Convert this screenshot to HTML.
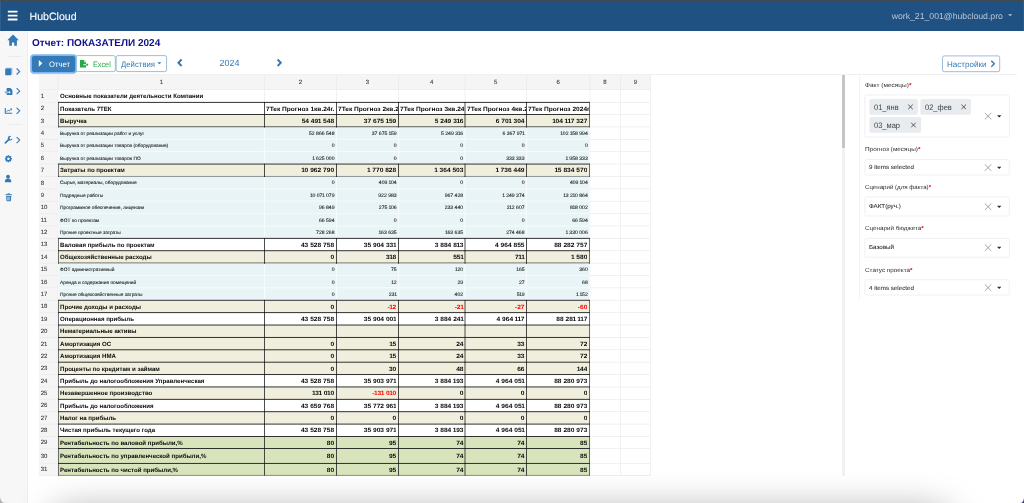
<!DOCTYPE html>
<html lang="ru"><head><meta charset="utf-8"><title>HubCloud</title>
<style>
html,body{margin:0;padding:0;width:1024px;height:503px;overflow:hidden;background:#fff;font-family:"Liberation Sans",sans-serif;}
#root{position:relative;width:1024px;height:503px;overflow:hidden;will-change:transform;}
#root div,#root svg{position:absolute;box-sizing:border-box;white-space:nowrap;transform-origin:0 50%;}
#root{text-rendering:geometricPrecision;}
#topline{left:0;top:0;width:1024px;height:1px;background:#414a4e;}
#hdr{left:0;top:1px;width:1024px;height:29.6px;background:#205183;}
#side{left:0;top:30.6px;width:28.4px;height:473px;background:#f7f7f8;border-right:1px solid #efeff0;}
.ico{fill:#337ab7;}
.hr{background:#e4e6e9;height:0.6px;}
#title{left:32px;top:37.5px;font-size:10px;font-weight:bold;color:#10108c;line-height:12px;}
.btn{border-radius:1.8px;}
.bt{line-height:9px;}
/* grid */
.chdr{background:#f4f5f8;}
.cl{font-size:6px;color:#3c3c3c;-webkit-text-stroke:.1px #3c3c3c;text-align:center;line-height:8px;height:8px;}
.rl{font-size:6px;color:#3c3c3c;-webkit-text-stroke:.1px #3c3c3c;line-height:8px;height:8px;}
.gv{width:0.5px;background:#e6e6e6;}
.gh{height:0.5px;background:#e6e6e6;}
.tb{font-size:6.1px;font-weight:bold;color:#0a0a0a;overflow:hidden;line-height:8px;height:8px;}
.ts{font-size:5.1px;color:#222;-webkit-text-stroke:.1px #222;overflow:hidden;line-height:8px;height:8px;}
.r{text-align:right;transform-origin:100% 50% !important;}
.tb.r{transform:scaleX(1.087);}
.hd{transform:scaleX(1.075);}
.ts:not(.r){font-size:4.8px;}
.red{color:#f00;}
.ts i{font-style:normal;letter-spacing:-.31px;margin-left:-.31px;}
.tb i{font-style:normal;letter-spacing:-.34px;margin-left:-.34px;}
.bh{height:0.8px;background:#111;}
.bv{width:0.8px;background:#111;}
/* right panel */
.lbl{font-size:5.9px;transform:scaleX(1.10);color:#2e2e2e;line-height:8px;}
.lbl b{color:#e00;font-weight:bold;}
.sel{left:864.5px;width:145px;border:0.5px solid #e9e9ec;border-radius:2px;background:#fff;}
.sv{font-size:5.9px;color:#2b2b2b;-webkit-text-stroke:.06px #2b2b2b;line-height:8px;transform:scaleX(1.055);}
.ct{font-size:7.95px;color:#3a3f45;line-height:9px;transform:scaleX(.945);}
.chip{background:#e9ecef;border-radius:1.6px;height:15.6px;font-size:7.1px;color:#3a3f45;line-height:15.6px;padding-left:4.4px;}
</style></head><body>
<div id="root">
<div id="topline"></div>
<div id="hdr">
  <div style="left:29.5px;top:9.6px;font-size:10.6px;line-height:12px;color:#fff;-webkit-text-stroke:.1px #fff">HubCloud</div>
  <div style="left:891.7px;top:9.6px;font-size:8.7px;line-height:10px;color:#b9c6d6">work_21_001@hubcloud.pro</div>
  <svg style="left:1007.6px;top:13.2px;width:4.4px;height:2.5px" viewBox="0 0 10 5"><path d="M0 0h10L5 5z" fill="#b9c6d6"/></svg>
</div>
<div id="edgeL" style="left:0;top:1px;width:1px;height:29.6px;background:rgba(255,255,255,.08)"></div><div style="left:1023px;top:1px;width:1px;height:29.6px;background:rgba(255,255,255,.06)"></div>
<div id="side"></div>
<svg id="icons" style="left:0;top:0;width:1024px;height:503px" viewBox="0 0 1024 503">
<g fill="#337ab7" stroke="none">
 <!-- home -->
 <path d="M13.05 34.5L18.8 40.3H16.9V45.7H14.2V42.4H11.9V45.7H9.2V40.3H7.3Z"/>
 <!-- book -->
 <rect x="6" y="67.7" width="6.4" height="6.7" rx=".5" fill-opacity=".42"/><rect x="5.2" y="68.4" width="6" height="6.8" rx=".6"/>
 <!-- file import -->
 <path d="M7.3 88.1H10.4L12.4 90.1V94.4a.7.7 0 0 1-.7.7H7.3a.7.7 0 0 1-.7-.7V88.8a.7.7 0 0 1 .7-.7Z"/>
 <rect x="4.7" y="91.7" width="2" height="1"/>
 <!-- chart arrow head -->
 <path d="M9.9 108.4H12V110.5Z"/>
 <!-- wrench head -->
 <path d="M11.1 136.2a2.3 2.3 0 1 0 1.3 2.1L10.9 139.5L9.6 138.9L9.5 137.5Z"/>
 <!-- user -->
 <circle cx="8.05" cy="176.75" r="1.95"/>
 <path d="M4.9 182.2V181.3a2.5 2.5 0 0 1 2.5-2.5H8.7a2.5 2.5 0 0 1 2.5 2.5V182.2Z"/>
 <!-- trash -->
 <rect x="5.5" y="194.2" width="6.4" height="1"/>
 <rect x="7.5" y="193.4" width="2.4" height="1"/>
 <path d="M6.1 195.9H11.3L10.9 200.7a.7.7 0 0 1-.7.6H7.2a.7.7 0 0 1-.7-.6Z"/>
 <!-- play -->
</g>
<g fill="#f7f7f8">
 <rect x="6.6" y="91.75" width="2.6" height=".9"/>
 <path d="M9 90.7L10.6 92.2L9 93.7Z"/>
 <rect x="7.35" y="196.8" width=".5" height="3.6"/>
 <rect x="8.45" y="196.8" width=".5" height="3.6"/>
 <rect x="9.55" y="196.8" width=".5" height="3.6"/>
</g>
<g fill="none" stroke="#337ab7">
 <!-- side chevrons -->
 <path d="M16.6 68.5L19.7 71.5L16.6 74.5M16.6 88.2L19.7 91.2L16.6 94.2M16.6 107.8L19.7 110.8L16.6 113.8M16.6 137.1L19.7 140.1L16.6 143.1" stroke-width="1.08"/>
 <!-- chart -->
 <path d="M5.3 108V113.3H12.2" stroke-width="1.1"/>
 <path d="M6.7 111.7L8.2 110.1L9.4 111L11.2 109.2" stroke-width="1"/>
 <!-- wrench handle -->
 <path d="M5.4 142.9L9 139.3" stroke-width="1.7" stroke-linecap="round"/>
 <!-- nav chevrons -->
 <path d="M181.6 59.5L178.4 62.75L181.6 66M277.6 59.5L280.8 62.75L277.6 66" stroke-width="1.9"/>
 <path d="M991.3 60.7L994.3 63.7L991.3 66.7" stroke-width="1.4"/>
</g>
<!-- gear -->
<g transform="translate(8.4 158.75)" fill="#337ab7">
 <circle r="2.75"/>
 <rect x="-.8" y="-3.5" width="1.6" height="7"/>
 <rect x="-.8" y="-3.5" width="1.6" height="7" transform="rotate(45)"/>
 <rect x="-.8" y="-3.5" width="1.6" height="7" transform="rotate(90)"/>
 <rect x="-.8" y="-3.5" width="1.6" height="7" transform="rotate(135)"/>
 <circle r="1.25" fill="#f7f7f8"/>
</g>
<!-- excel icon -->
<path fill="#28a745" d="M80.5 60H83.9V61.8a.4.4 0 0 0 .4.4H86V64.2H83.3V65.3H86V67a.55.55 0 0 1-.55.55H80.5a.55.55 0 0 1-.55-.55V60.55a.55.55 0 0 1 .55-.55ZM84.5 60L86 61.6H84.5ZM86 64.2H86.8V63.1L88.4 64.75L86.8 66.4V65.3H86Z"/>
<rect x="7" y="56" width="14.4" height=".7" fill="#e4e6e9"/><rect x="7" y="124.2" width="14.4" height=".7" fill="#e4e6e9"/>
<!-- hamburger -->
<g fill="#fff"><rect x="7.8" y="10.7" width="9.7" height="1.9" rx=".3"/><rect x="7.8" y="14.65" width="9.7" height="1.9" rx=".3"/><rect x="7.8" y="18.55" width="9.7" height="1.9" rx=".3"/></g>
</svg>
<div id="title">Отчет: ПОКАЗАТЕЛИ 2024</div>

<!-- toolbar -->
<div class="btn" style="left:32px;top:56px;width:43px;height:16px;background:#337ab7;box-shadow:0 0 0 1.8px #7cb6f3;border-radius:2px"></div>
<div class="bt" style="left:48.6px;top:60px;font-size:7.9px;transform:scaleX(.968);color:#fff">Отчет</div>
<div class="bt" style="left:92.9px;top:60px;font-size:7.9px;transform:scaleX(.92);color:#28a745">Excel</div>
<div class="bt" style="left:120.7px;top:60px;font-size:7.9px;transform:scaleX(.986);color:#337ab7">Действия</div>
<div class="bt" style="left:219.5px;top:57.6px;font-size:9px;line-height:11px;color:#337ab7">2024</div>
<div class="bt" style="left:946.6px;top:60px;font-size:7.9px;transform:scaleX(1.018);color:#337ab7">Настройки</div>
<div style="left:32px;top:73.9px;width:984.5px;height:0.5px;background:#f0f0f0"></div>
<svg style="left:0;top:0;width:1024px;height:503px" viewBox="0 0 1024 503">
 <g fill="none" stroke-width=".75">
  <rect x="75.6" y="55.6" width="39.7" height="16" rx="1.8" stroke="#6cc07f"/>
  <rect x="116.2" y="55.6" width="50.4" height="16" rx="1.8" stroke="#79a7d3"/>
  <rect x="942.5" y="55.9" width="57.2" height="15.8" rx="1.8" stroke="#79a7d3"/>
 </g>
 <path d="M157.4 62.2h4l-2 2.1z" fill="#337ab7"/>
 <path d="M38.8 59.9L42.3 63.35L38.8 66.8Z" fill="#fff"/>
</svg>

<svg id="gridsvg" style="left:0;top:0;width:1024px;height:503px" viewBox="0 0 1024 503"><rect x="39" y="74.7" width="611.5" height="14.8" fill="#f5f5f6"/><rect x="39" y="89.5" width="19" height="385.89" fill="#f5f5f6"/><rect x="57.67" y="74.7" width="0.65" height="400.69" fill="#e9e9e9"/><rect x="264.12" y="74.7" width="0.65" height="400.69" fill="#e9e9e9"/><rect x="336.12" y="74.7" width="0.65" height="400.69" fill="#e9e9e9"/><rect x="398.28" y="74.7" width="0.65" height="400.69" fill="#e9e9e9"/><rect x="464.68" y="74.7" width="0.65" height="400.69" fill="#e9e9e9"/><rect x="526.12" y="74.7" width="0.65" height="400.69" fill="#e9e9e9"/><rect x="589.57" y="74.7" width="0.65" height="400.69" fill="#e9e9e9"/><rect x="619.97" y="74.7" width="0.65" height="400.69" fill="#e9e9e9"/><rect x="650.17" y="74.7" width="0.65" height="400.69" fill="#e9e9e9"/><rect x="39" y="89.17" width="611.5" height="0.65" fill="#e9e9e9"/><rect x="39" y="102.03" width="611.5" height="0.65" fill="#e9e9e9"/><rect x="39" y="114.19" width="611.5" height="0.65" fill="#e9e9e9"/><rect x="39" y="126.57" width="611.5" height="0.65" fill="#e9e9e9"/><rect x="39" y="138.96" width="611.5" height="0.65" fill="#e9e9e9"/><rect x="39" y="151.34" width="611.5" height="0.65" fill="#e9e9e9"/><rect x="39" y="163.72" width="611.5" height="0.65" fill="#e9e9e9"/><rect x="39" y="176.11" width="611.5" height="0.65" fill="#e9e9e9"/><rect x="39" y="188.49" width="611.5" height="0.65" fill="#e9e9e9"/><rect x="39" y="200.87" width="611.5" height="0.65" fill="#e9e9e9"/><rect x="39" y="213.26" width="611.5" height="0.65" fill="#e9e9e9"/><rect x="39" y="225.64" width="611.5" height="0.65" fill="#e9e9e9"/><rect x="39" y="238.02" width="611.5" height="0.65" fill="#e9e9e9"/><rect x="39" y="250.4" width="611.5" height="0.65" fill="#e9e9e9"/><rect x="39" y="262.79" width="611.5" height="0.65" fill="#e9e9e9"/><rect x="39" y="275.17" width="611.5" height="0.65" fill="#e9e9e9"/><rect x="39" y="287.55" width="611.5" height="0.65" fill="#e9e9e9"/><rect x="39" y="299.94" width="611.5" height="0.65" fill="#e9e9e9"/><rect x="39" y="312.32" width="611.5" height="0.65" fill="#e9e9e9"/><rect x="39" y="324.7" width="611.5" height="0.65" fill="#e9e9e9"/><rect x="39" y="337.08" width="611.5" height="0.65" fill="#e9e9e9"/><rect x="39" y="349.47" width="611.5" height="0.65" fill="#e9e9e9"/><rect x="39" y="361.85" width="611.5" height="0.65" fill="#e9e9e9"/><rect x="39" y="374.23" width="611.5" height="0.65" fill="#e9e9e9"/><rect x="39" y="386.62" width="611.5" height="0.65" fill="#e9e9e9"/><rect x="39" y="399" width="611.5" height="0.65" fill="#e9e9e9"/><rect x="39" y="411.38" width="611.5" height="0.65" fill="#e9e9e9"/><rect x="39" y="423.77" width="611.5" height="0.65" fill="#e9e9e9"/><rect x="39" y="436.15" width="611.5" height="0.65" fill="#e9e9e9"/><rect x="39" y="448.18" width="611.5" height="0.65" fill="#e9e9e9"/><rect x="39" y="463.07" width="611.5" height="0.65" fill="#e9e9e9"/><rect x="39" y="475.06" width="611.5" height="0.65" fill="#e9e9e9"/><rect x="58.45" y="102.36" width="531.25" height="12.16" fill="#ffffff"/><rect x="58.45" y="114.52" width="531.25" height="12.38" fill="#f0eedc"/><rect x="58.45" y="126.9" width="531.25" height="12.38" fill="#f8fcfc"/><rect x="58.95" y="127.4" width="205" height="11.38" fill="#e8f4f6"/><rect x="264.95" y="127.4" width="71" height="11.38" fill="#e8f4f6"/><rect x="336.95" y="127.4" width="61.15" height="11.38" fill="#e8f4f6"/><rect x="399.1" y="127.4" width="65.4" height="11.38" fill="#e8f4f6"/><rect x="465.5" y="127.4" width="60.45" height="11.38" fill="#e8f4f6"/><rect x="526.95" y="127.4" width="62.25" height="11.38" fill="#e8f4f6"/><rect x="58.45" y="139.28" width="531.25" height="12.38" fill="#f8fcfc"/><rect x="58.95" y="139.78" width="205" height="11.38" fill="#e8f4f6"/><rect x="264.95" y="139.78" width="71" height="11.38" fill="#e8f4f6"/><rect x="336.95" y="139.78" width="61.15" height="11.38" fill="#e8f4f6"/><rect x="399.1" y="139.78" width="65.4" height="11.38" fill="#e8f4f6"/><rect x="465.5" y="139.78" width="60.45" height="11.38" fill="#e8f4f6"/><rect x="526.95" y="139.78" width="62.25" height="11.38" fill="#e8f4f6"/><rect x="58.45" y="151.66" width="531.25" height="12.38" fill="#f8fcfc"/><rect x="58.95" y="152.16" width="205" height="11.38" fill="#e8f4f6"/><rect x="264.95" y="152.16" width="71" height="11.38" fill="#e8f4f6"/><rect x="336.95" y="152.16" width="61.15" height="11.38" fill="#e8f4f6"/><rect x="399.1" y="152.16" width="65.4" height="11.38" fill="#e8f4f6"/><rect x="465.5" y="152.16" width="60.45" height="11.38" fill="#e8f4f6"/><rect x="526.95" y="152.16" width="62.25" height="11.38" fill="#e8f4f6"/><rect x="58.45" y="164.05" width="531.25" height="12.38" fill="#f0eedc"/><rect x="58.45" y="176.43" width="531.25" height="12.38" fill="#f8fcfc"/><rect x="58.95" y="176.93" width="205" height="11.38" fill="#e8f4f6"/><rect x="264.95" y="176.93" width="71" height="11.38" fill="#e8f4f6"/><rect x="336.95" y="176.93" width="61.15" height="11.38" fill="#e8f4f6"/><rect x="399.1" y="176.93" width="65.4" height="11.38" fill="#e8f4f6"/><rect x="465.5" y="176.93" width="60.45" height="11.38" fill="#e8f4f6"/><rect x="526.95" y="176.93" width="62.25" height="11.38" fill="#e8f4f6"/><rect x="58.45" y="188.81" width="531.25" height="12.38" fill="#f8fcfc"/><rect x="58.95" y="189.31" width="205" height="11.38" fill="#e8f4f6"/><rect x="264.95" y="189.31" width="71" height="11.38" fill="#e8f4f6"/><rect x="336.95" y="189.31" width="61.15" height="11.38" fill="#e8f4f6"/><rect x="399.1" y="189.31" width="65.4" height="11.38" fill="#e8f4f6"/><rect x="465.5" y="189.31" width="60.45" height="11.38" fill="#e8f4f6"/><rect x="526.95" y="189.31" width="62.25" height="11.38" fill="#e8f4f6"/><rect x="58.45" y="201.2" width="531.25" height="12.38" fill="#f8fcfc"/><rect x="58.95" y="201.7" width="205" height="11.38" fill="#e8f4f6"/><rect x="264.95" y="201.7" width="71" height="11.38" fill="#e8f4f6"/><rect x="336.95" y="201.7" width="61.15" height="11.38" fill="#e8f4f6"/><rect x="399.1" y="201.7" width="65.4" height="11.38" fill="#e8f4f6"/><rect x="465.5" y="201.7" width="60.45" height="11.38" fill="#e8f4f6"/><rect x="526.95" y="201.7" width="62.25" height="11.38" fill="#e8f4f6"/><rect x="58.45" y="213.58" width="531.25" height="12.38" fill="#f8fcfc"/><rect x="58.95" y="214.08" width="205" height="11.38" fill="#e8f4f6"/><rect x="264.95" y="214.08" width="71" height="11.38" fill="#e8f4f6"/><rect x="336.95" y="214.08" width="61.15" height="11.38" fill="#e8f4f6"/><rect x="399.1" y="214.08" width="65.4" height="11.38" fill="#e8f4f6"/><rect x="465.5" y="214.08" width="60.45" height="11.38" fill="#e8f4f6"/><rect x="526.95" y="214.08" width="62.25" height="11.38" fill="#e8f4f6"/><rect x="58.45" y="225.96" width="531.25" height="12.38" fill="#f8fcfc"/><rect x="58.95" y="226.46" width="205" height="11.38" fill="#e8f4f6"/><rect x="264.95" y="226.46" width="71" height="11.38" fill="#e8f4f6"/><rect x="336.95" y="226.46" width="61.15" height="11.38" fill="#e8f4f6"/><rect x="399.1" y="226.46" width="65.4" height="11.38" fill="#e8f4f6"/><rect x="465.5" y="226.46" width="60.45" height="11.38" fill="#e8f4f6"/><rect x="526.95" y="226.46" width="62.25" height="11.38" fill="#e8f4f6"/><rect x="58.45" y="238.35" width="531.25" height="12.38" fill="#ffffff"/><rect x="58.45" y="250.73" width="531.25" height="12.38" fill="#f0eedc"/><rect x="58.45" y="263.11" width="531.25" height="12.38" fill="#f8fcfc"/><rect x="58.95" y="263.61" width="205" height="11.38" fill="#e8f4f6"/><rect x="264.95" y="263.61" width="71" height="11.38" fill="#e8f4f6"/><rect x="336.95" y="263.61" width="61.15" height="11.38" fill="#e8f4f6"/><rect x="399.1" y="263.61" width="65.4" height="11.38" fill="#e8f4f6"/><rect x="465.5" y="263.61" width="60.45" height="11.38" fill="#e8f4f6"/><rect x="526.95" y="263.61" width="62.25" height="11.38" fill="#e8f4f6"/><rect x="58.45" y="275.5" width="531.25" height="12.38" fill="#f8fcfc"/><rect x="58.95" y="276" width="205" height="11.38" fill="#e8f4f6"/><rect x="264.95" y="276" width="71" height="11.38" fill="#e8f4f6"/><rect x="336.95" y="276" width="61.15" height="11.38" fill="#e8f4f6"/><rect x="399.1" y="276" width="65.4" height="11.38" fill="#e8f4f6"/><rect x="465.5" y="276" width="60.45" height="11.38" fill="#e8f4f6"/><rect x="526.95" y="276" width="62.25" height="11.38" fill="#e8f4f6"/><rect x="58.45" y="287.88" width="531.25" height="12.38" fill="#f8fcfc"/><rect x="58.95" y="288.38" width="205" height="11.38" fill="#e8f4f6"/><rect x="264.95" y="288.38" width="71" height="11.38" fill="#e8f4f6"/><rect x="336.95" y="288.38" width="61.15" height="11.38" fill="#e8f4f6"/><rect x="399.1" y="288.38" width="65.4" height="11.38" fill="#e8f4f6"/><rect x="465.5" y="288.38" width="60.45" height="11.38" fill="#e8f4f6"/><rect x="526.95" y="288.38" width="62.25" height="11.38" fill="#e8f4f6"/><rect x="58.45" y="300.26" width="531.25" height="12.38" fill="#f0eedc"/><rect x="58.45" y="312.64" width="531.25" height="12.38" fill="#ffffff"/><rect x="58.45" y="325.03" width="531.25" height="12.38" fill="#f0eedc"/><rect x="58.45" y="337.41" width="531.25" height="12.38" fill="#f0eedc"/><rect x="58.45" y="349.79" width="531.25" height="12.38" fill="#f0eedc"/><rect x="58.45" y="362.18" width="531.25" height="12.38" fill="#f0eedc"/><rect x="58.45" y="374.56" width="531.25" height="12.38" fill="#ffffff"/><rect x="58.45" y="386.94" width="531.25" height="12.38" fill="#f0eedc"/><rect x="58.45" y="399.32" width="531.25" height="12.38" fill="#ffffff"/><rect x="58.45" y="411.71" width="531.25" height="12.38" fill="#f0eedc"/><rect x="58.45" y="424.09" width="531.25" height="12.38" fill="#ffffff"/><rect x="58.45" y="436.47" width="531.25" height="12.03" fill="#d8e4bc"/><rect x="58.45" y="448.5" width="531.25" height="14.9" fill="#d8e4bc"/><rect x="58.45" y="463.4" width="531.25" height="11.99" fill="#d8e4bc"/><rect x="58.15" y="101.91" width="0.6" height="13.06" fill="#1c1c1c"/><rect x="264.06" y="101.91" width="0.78" height="13.06" fill="#1c1c1c"/><rect x="336.06" y="101.91" width="0.78" height="13.06" fill="#1c1c1c"/><rect x="398.21" y="101.91" width="0.78" height="13.06" fill="#1c1c1c"/><rect x="464.61" y="101.91" width="0.78" height="13.06" fill="#1c1c1c"/><rect x="526.06" y="101.91" width="0.78" height="13.06" fill="#1c1c1c"/><rect x="589.1" y="101.91" width="0.6" height="13.06" fill="#1c1c1c"/><rect x="58.15" y="114.07" width="0.6" height="13.28" fill="#1c1c1c"/><rect x="264.06" y="114.07" width="0.78" height="13.28" fill="#1c1c1c"/><rect x="336.06" y="114.07" width="0.78" height="13.28" fill="#1c1c1c"/><rect x="398.21" y="114.07" width="0.78" height="13.28" fill="#1c1c1c"/><rect x="464.61" y="114.07" width="0.78" height="13.28" fill="#1c1c1c"/><rect x="526.06" y="114.07" width="0.78" height="13.28" fill="#1c1c1c"/><rect x="589.1" y="114.07" width="0.6" height="13.28" fill="#1c1c1c"/><rect x="58.15" y="163.6" width="0.6" height="13.28" fill="#1c1c1c"/><rect x="264.06" y="163.6" width="0.78" height="13.28" fill="#1c1c1c"/><rect x="336.06" y="163.6" width="0.78" height="13.28" fill="#1c1c1c"/><rect x="398.21" y="163.6" width="0.78" height="13.28" fill="#1c1c1c"/><rect x="464.61" y="163.6" width="0.78" height="13.28" fill="#1c1c1c"/><rect x="526.06" y="163.6" width="0.78" height="13.28" fill="#1c1c1c"/><rect x="589.1" y="163.6" width="0.6" height="13.28" fill="#1c1c1c"/><rect x="58.15" y="237.9" width="0.6" height="13.28" fill="#1c1c1c"/><rect x="264.06" y="237.9" width="0.78" height="13.28" fill="#1c1c1c"/><rect x="336.06" y="237.9" width="0.78" height="13.28" fill="#1c1c1c"/><rect x="398.21" y="237.9" width="0.78" height="13.28" fill="#1c1c1c"/><rect x="464.61" y="237.9" width="0.78" height="13.28" fill="#1c1c1c"/><rect x="526.06" y="237.9" width="0.78" height="13.28" fill="#1c1c1c"/><rect x="589.1" y="237.9" width="0.6" height="13.28" fill="#1c1c1c"/><rect x="58.15" y="250.28" width="0.6" height="13.28" fill="#1c1c1c"/><rect x="264.06" y="250.28" width="0.78" height="13.28" fill="#1c1c1c"/><rect x="336.06" y="250.28" width="0.78" height="13.28" fill="#1c1c1c"/><rect x="398.21" y="250.28" width="0.78" height="13.28" fill="#1c1c1c"/><rect x="464.61" y="250.28" width="0.78" height="13.28" fill="#1c1c1c"/><rect x="526.06" y="250.28" width="0.78" height="13.28" fill="#1c1c1c"/><rect x="589.1" y="250.28" width="0.6" height="13.28" fill="#1c1c1c"/><rect x="58.15" y="299.81" width="0.6" height="13.28" fill="#1c1c1c"/><rect x="264.06" y="299.81" width="0.78" height="13.28" fill="#1c1c1c"/><rect x="336.06" y="299.81" width="0.78" height="13.28" fill="#1c1c1c"/><rect x="398.21" y="299.81" width="0.78" height="13.28" fill="#1c1c1c"/><rect x="464.61" y="299.81" width="0.78" height="13.28" fill="#1c1c1c"/><rect x="526.06" y="299.81" width="0.78" height="13.28" fill="#1c1c1c"/><rect x="589.1" y="299.81" width="0.6" height="13.28" fill="#1c1c1c"/><rect x="58.15" y="312.19" width="0.6" height="13.28" fill="#1c1c1c"/><rect x="264.06" y="312.19" width="0.78" height="13.28" fill="#1c1c1c"/><rect x="336.06" y="312.19" width="0.78" height="13.28" fill="#1c1c1c"/><rect x="398.21" y="312.19" width="0.78" height="13.28" fill="#1c1c1c"/><rect x="464.61" y="312.19" width="0.78" height="13.28" fill="#1c1c1c"/><rect x="526.06" y="312.19" width="0.78" height="13.28" fill="#1c1c1c"/><rect x="589.1" y="312.19" width="0.6" height="13.28" fill="#1c1c1c"/><rect x="58.15" y="324.58" width="0.6" height="13.28" fill="#1c1c1c"/><rect x="264.06" y="324.58" width="0.78" height="13.28" fill="#1c1c1c"/><rect x="336.06" y="324.58" width="0.78" height="13.28" fill="#1c1c1c"/><rect x="398.21" y="324.58" width="0.78" height="13.28" fill="#1c1c1c"/><rect x="464.61" y="324.58" width="0.78" height="13.28" fill="#1c1c1c"/><rect x="526.06" y="324.58" width="0.78" height="13.28" fill="#1c1c1c"/><rect x="589.1" y="324.58" width="0.6" height="13.28" fill="#1c1c1c"/><rect x="58.15" y="336.96" width="0.6" height="13.28" fill="#1c1c1c"/><rect x="264.06" y="336.96" width="0.78" height="13.28" fill="#1c1c1c"/><rect x="336.06" y="336.96" width="0.78" height="13.28" fill="#1c1c1c"/><rect x="398.21" y="336.96" width="0.78" height="13.28" fill="#1c1c1c"/><rect x="464.61" y="336.96" width="0.78" height="13.28" fill="#1c1c1c"/><rect x="526.06" y="336.96" width="0.78" height="13.28" fill="#1c1c1c"/><rect x="589.1" y="336.96" width="0.6" height="13.28" fill="#1c1c1c"/><rect x="58.15" y="349.34" width="0.6" height="13.28" fill="#1c1c1c"/><rect x="264.06" y="349.34" width="0.78" height="13.28" fill="#1c1c1c"/><rect x="336.06" y="349.34" width="0.78" height="13.28" fill="#1c1c1c"/><rect x="398.21" y="349.34" width="0.78" height="13.28" fill="#1c1c1c"/><rect x="464.61" y="349.34" width="0.78" height="13.28" fill="#1c1c1c"/><rect x="526.06" y="349.34" width="0.78" height="13.28" fill="#1c1c1c"/><rect x="589.1" y="349.34" width="0.6" height="13.28" fill="#1c1c1c"/><rect x="58.15" y="361.73" width="0.6" height="13.28" fill="#1c1c1c"/><rect x="264.06" y="361.73" width="0.78" height="13.28" fill="#1c1c1c"/><rect x="336.06" y="361.73" width="0.78" height="13.28" fill="#1c1c1c"/><rect x="398.21" y="361.73" width="0.78" height="13.28" fill="#1c1c1c"/><rect x="464.61" y="361.73" width="0.78" height="13.28" fill="#1c1c1c"/><rect x="526.06" y="361.73" width="0.78" height="13.28" fill="#1c1c1c"/><rect x="589.1" y="361.73" width="0.6" height="13.28" fill="#1c1c1c"/><rect x="58.15" y="374.11" width="0.6" height="13.28" fill="#1c1c1c"/><rect x="264.06" y="374.11" width="0.78" height="13.28" fill="#1c1c1c"/><rect x="336.06" y="374.11" width="0.78" height="13.28" fill="#1c1c1c"/><rect x="398.21" y="374.11" width="0.78" height="13.28" fill="#1c1c1c"/><rect x="464.61" y="374.11" width="0.78" height="13.28" fill="#1c1c1c"/><rect x="526.06" y="374.11" width="0.78" height="13.28" fill="#1c1c1c"/><rect x="589.1" y="374.11" width="0.6" height="13.28" fill="#1c1c1c"/><rect x="58.15" y="386.49" width="0.6" height="13.28" fill="#1c1c1c"/><rect x="264.06" y="386.49" width="0.78" height="13.28" fill="#1c1c1c"/><rect x="336.06" y="386.49" width="0.78" height="13.28" fill="#1c1c1c"/><rect x="398.21" y="386.49" width="0.78" height="13.28" fill="#1c1c1c"/><rect x="464.61" y="386.49" width="0.78" height="13.28" fill="#1c1c1c"/><rect x="526.06" y="386.49" width="0.78" height="13.28" fill="#1c1c1c"/><rect x="589.1" y="386.49" width="0.6" height="13.28" fill="#1c1c1c"/><rect x="58.15" y="398.87" width="0.6" height="13.28" fill="#1c1c1c"/><rect x="264.06" y="398.87" width="0.78" height="13.28" fill="#1c1c1c"/><rect x="336.06" y="398.87" width="0.78" height="13.28" fill="#1c1c1c"/><rect x="398.21" y="398.87" width="0.78" height="13.28" fill="#1c1c1c"/><rect x="464.61" y="398.87" width="0.78" height="13.28" fill="#1c1c1c"/><rect x="526.06" y="398.87" width="0.78" height="13.28" fill="#1c1c1c"/><rect x="589.1" y="398.87" width="0.6" height="13.28" fill="#1c1c1c"/><rect x="58.15" y="411.26" width="0.6" height="13.28" fill="#1c1c1c"/><rect x="264.06" y="411.26" width="0.78" height="13.28" fill="#1c1c1c"/><rect x="336.06" y="411.26" width="0.78" height="13.28" fill="#1c1c1c"/><rect x="398.21" y="411.26" width="0.78" height="13.28" fill="#1c1c1c"/><rect x="464.61" y="411.26" width="0.78" height="13.28" fill="#1c1c1c"/><rect x="526.06" y="411.26" width="0.78" height="13.28" fill="#1c1c1c"/><rect x="589.1" y="411.26" width="0.6" height="13.28" fill="#1c1c1c"/><rect x="58.15" y="423.64" width="0.6" height="13.28" fill="#1c1c1c"/><rect x="264.06" y="423.64" width="0.78" height="13.28" fill="#1c1c1c"/><rect x="336.06" y="423.64" width="0.78" height="13.28" fill="#1c1c1c"/><rect x="398.21" y="423.64" width="0.78" height="13.28" fill="#1c1c1c"/><rect x="464.61" y="423.64" width="0.78" height="13.28" fill="#1c1c1c"/><rect x="526.06" y="423.64" width="0.78" height="13.28" fill="#1c1c1c"/><rect x="589.1" y="423.64" width="0.6" height="13.28" fill="#1c1c1c"/><rect x="58.15" y="436.02" width="0.6" height="12.93" fill="#1c1c1c"/><rect x="264.06" y="436.02" width="0.78" height="12.93" fill="#1c1c1c"/><rect x="336.06" y="436.02" width="0.78" height="12.93" fill="#1c1c1c"/><rect x="398.21" y="436.02" width="0.78" height="12.93" fill="#1c1c1c"/><rect x="464.61" y="436.02" width="0.78" height="12.93" fill="#1c1c1c"/><rect x="526.06" y="436.02" width="0.78" height="12.93" fill="#1c1c1c"/><rect x="589.1" y="436.02" width="0.6" height="12.93" fill="#1c1c1c"/><rect x="58.15" y="448.05" width="0.6" height="15.8" fill="#1c1c1c"/><rect x="264.06" y="448.05" width="0.78" height="15.8" fill="#1c1c1c"/><rect x="336.06" y="448.05" width="0.78" height="15.8" fill="#1c1c1c"/><rect x="398.21" y="448.05" width="0.78" height="15.8" fill="#1c1c1c"/><rect x="464.61" y="448.05" width="0.78" height="15.8" fill="#1c1c1c"/><rect x="526.06" y="448.05" width="0.78" height="15.8" fill="#1c1c1c"/><rect x="589.1" y="448.05" width="0.6" height="15.8" fill="#1c1c1c"/><rect x="58.15" y="462.95" width="0.6" height="12.89" fill="#1c1c1c"/><rect x="264.06" y="462.95" width="0.78" height="12.89" fill="#1c1c1c"/><rect x="336.06" y="462.95" width="0.78" height="12.89" fill="#1c1c1c"/><rect x="398.21" y="462.95" width="0.78" height="12.89" fill="#1c1c1c"/><rect x="464.61" y="462.95" width="0.78" height="12.89" fill="#1c1c1c"/><rect x="526.06" y="462.95" width="0.78" height="12.89" fill="#1c1c1c"/><rect x="589.1" y="462.95" width="0.6" height="12.89" fill="#1c1c1c"/><rect x="58.15" y="101.91" width="531.55" height="0.9" fill="#1c1c1c"/><rect x="58.15" y="114.07" width="531.55" height="0.9" fill="#1c1c1c"/><rect x="58.15" y="126.45" width="531.55" height="0.9" fill="#1c1c1c"/><rect x="58.15" y="163.6" width="531.55" height="0.9" fill="#1c1c1c"/><rect x="58.15" y="175.98" width="531.55" height="0.9" fill="#1c1c1c"/><rect x="58.15" y="237.9" width="531.55" height="0.9" fill="#1c1c1c"/><rect x="58.15" y="250.28" width="531.55" height="0.9" fill="#1c1c1c"/><rect x="58.15" y="262.66" width="531.55" height="0.9" fill="#1c1c1c"/><rect x="58.15" y="299.81" width="531.55" height="0.9" fill="#1c1c1c"/><rect x="58.15" y="312.19" width="531.55" height="0.9" fill="#1c1c1c"/><rect x="58.15" y="324.58" width="531.55" height="0.9" fill="#1c1c1c"/><rect x="58.15" y="336.96" width="531.55" height="0.9" fill="#1c1c1c"/><rect x="58.15" y="349.34" width="531.55" height="0.9" fill="#1c1c1c"/><rect x="58.15" y="361.73" width="531.55" height="0.9" fill="#1c1c1c"/><rect x="58.15" y="374.11" width="531.55" height="0.9" fill="#1c1c1c"/><rect x="58.15" y="386.49" width="531.55" height="0.9" fill="#1c1c1c"/><rect x="58.15" y="398.88" width="531.55" height="0.9" fill="#1c1c1c"/><rect x="58.15" y="411.26" width="531.55" height="0.9" fill="#1c1c1c"/><rect x="58.15" y="423.64" width="531.55" height="0.9" fill="#1c1c1c"/><rect x="58.15" y="436.02" width="531.55" height="0.9" fill="#1c1c1c"/><rect x="58.15" y="448.05" width="531.55" height="0.9" fill="#1c1c1c"/><rect x="58.15" y="462.95" width="531.55" height="0.9" fill="#1c1c1c"/><rect x="58.15" y="474.94" width="531.55" height="0.6" fill="#55554c"/><rect x="58.95" y="126.95" width="205" height="0.6" fill="#e8f4f6"/><rect x="264.95" y="126.95" width="71" height="0.6" fill="#e8f4f6"/><rect x="336.95" y="126.95" width="61.15" height="0.6" fill="#e8f4f6"/><rect x="399.1" y="126.95" width="65.4" height="0.6" fill="#e8f4f6"/><rect x="465.5" y="126.95" width="60.45" height="0.6" fill="#e8f4f6"/><rect x="526.95" y="126.95" width="62.25" height="0.6" fill="#e8f4f6"/><rect x="58.95" y="176.48" width="205" height="0.6" fill="#e8f4f6"/><rect x="264.95" y="176.48" width="71" height="0.6" fill="#e8f4f6"/><rect x="336.95" y="176.48" width="61.15" height="0.6" fill="#e8f4f6"/><rect x="399.1" y="176.48" width="65.4" height="0.6" fill="#e8f4f6"/><rect x="465.5" y="176.48" width="60.45" height="0.6" fill="#e8f4f6"/><rect x="526.95" y="176.48" width="62.25" height="0.6" fill="#e8f4f6"/><rect x="58.95" y="263.16" width="205" height="0.6" fill="#e8f4f6"/><rect x="264.95" y="263.16" width="71" height="0.6" fill="#e8f4f6"/><rect x="336.95" y="263.16" width="61.15" height="0.6" fill="#e8f4f6"/><rect x="399.1" y="263.16" width="65.4" height="0.6" fill="#e8f4f6"/><rect x="465.5" y="263.16" width="60.45" height="0.6" fill="#e8f4f6"/><rect x="526.95" y="263.16" width="62.25" height="0.6" fill="#e8f4f6"/></svg>
<div id="grid" style="left:0;top:0;width:1024px;height:503px">
<div class="cl" style="left:58.45px;top:79px;width:206px">1</div>
<div class="cl" style="left:264.45px;top:79px;width:72px">2</div>
<div class="cl" style="left:336.45px;top:79px;width:62.15px">3</div>
<div class="cl" style="left:398.6px;top:79px;width:66.4px">4</div>
<div class="cl" style="left:465px;top:79px;width:61.45px">5</div>
<div class="cl" style="left:526.45px;top:79px;width:63.25px">6</div>
<div class="cl" style="left:589.7px;top:79px;width:30.6px">8</div>
<div class="cl" style="left:620.3px;top:79px;width:30.2px">9</div>
<div class="rl" style="left:40.7px;top:93px">1</div>
<div class="rl" style="left:40.7px;top:105px">2</div>
<div class="rl" style="left:40.7px;top:118px">3</div>
<div class="rl" style="left:40.7px;top:130px">4</div>
<div class="rl" style="left:40.7px;top:142px">5</div>
<div class="rl" style="left:40.7px;top:155px">6</div>
<div class="rl" style="left:40.7px;top:167px">7</div>
<div class="rl" style="left:40.7px;top:180px">8</div>
<div class="rl" style="left:40.7px;top:192px">9</div>
<div class="rl" style="left:40.7px;top:204px">10</div>
<div class="rl" style="left:40.7px;top:217px">11</div>
<div class="rl" style="left:40.7px;top:229px">12</div>
<div class="rl" style="left:40.7px;top:241px">13</div>
<div class="rl" style="left:40.7px;top:254px">14</div>
<div class="rl" style="left:40.7px;top:266px">15</div>
<div class="rl" style="left:40.7px;top:279px">16</div>
<div class="rl" style="left:40.7px;top:291px">17</div>
<div class="rl" style="left:40.7px;top:303px">18</div>
<div class="rl" style="left:40.7px;top:316px">19</div>
<div class="rl" style="left:40.7px;top:328px">20</div>
<div class="rl" style="left:40.7px;top:341px">21</div>
<div class="rl" style="left:40.7px;top:353px">22</div>
<div class="rl" style="left:40.7px;top:365px">23</div>
<div class="rl" style="left:40.7px;top:378px">24</div>
<div class="rl" style="left:40.7px;top:390px">25</div>
<div class="rl" style="left:40.7px;top:402px">26</div>
<div class="rl" style="left:40.7px;top:415px">27</div>
<div class="rl" style="left:40.7px;top:427px">28</div>
<div class="rl" style="left:40.7px;top:439px">29</div>
<div class="rl" style="left:40.7px;top:453px">30</div>
<div class="rl" style="left:40.7px;top:466px">31</div>
<div class="tb" style="left:60.05px;top:93px;width:204px">Основные показатели деятельности Компании</div>
<div class="tb" style="left:60.05px;top:106px;width:204px">Показатель 7ТЕК</div>
<div class="tb hd" style="left:266.05px;top:106px;width:65.02px">7Тек Прогноз 1кв.24г.</div>
<div class="tb hd" style="left:338.05px;top:106px;width:55.86px">7Тек Прогноз 2кв.24г.</div>
<div class="tb hd" style="left:400.2px;top:106px;width:59.81px">7Тек Прогноз 3кв.24г.</div>
<div class="tb hd" style="left:466.6px;top:106px;width:55.21px">7Тек Прогноз 4кв.24г.</div>
<div class="tb hd" style="left:528.05px;top:106px;width:56.88px">7Тек Прогноз 2024г.</div>
<div class="tb" style="left:60.05px;top:118px;width:204px">Выручка</div>
<div class="tb r" style="left:264.45px;top:118px;width:70.1px">54 49<i>1</i> 548</div>
<div class="tb r" style="left:336.45px;top:118px;width:60.25px">37 675 <i>1</i>59</div>
<div class="tb r" style="left:398.6px;top:118px;width:64.5px">5 249 3<i>1</i>6</div>
<div class="tb r" style="left:465px;top:118px;width:59.55px">6 70<i>1</i> 304</div>
<div class="tb r" style="left:526.45px;top:118px;width:61.35px"><i>1</i>04 <i>1</i><i>1</i>7 327</div>
<div class="ts" style="left:60.05px;top:131px;width:204px">Выручка от реализации работ и услуг</div>
<div class="ts r" style="left:264.45px;top:130px;width:70.1px">52 866 548</div>
<div class="ts r" style="left:336.45px;top:130px;width:60.25px">37 675 <i>1</i>59</div>
<div class="ts r" style="left:398.6px;top:130px;width:64.5px">5 249 3<i>1</i>6</div>
<div class="ts r" style="left:465px;top:130px;width:59.55px">6 367 97<i>1</i></div>
<div class="ts r" style="left:526.45px;top:130px;width:61.35px"><i>1</i>02 <i>1</i>58 994</div>
<div class="ts" style="left:60.05px;top:143px;width:204px">Выручка от реализации товаров (оборудования)</div>
<div class="ts r" style="left:264.45px;top:142px;width:70.1px">0</div>
<div class="ts r" style="left:336.45px;top:142px;width:60.25px">0</div>
<div class="ts r" style="left:398.6px;top:142px;width:64.5px">0</div>
<div class="ts r" style="left:465px;top:142px;width:59.55px">0</div>
<div class="ts r" style="left:526.45px;top:142px;width:61.35px">0</div>
<div class="ts" style="left:60.05px;top:156px;width:204px">Выручка от реализации товаров ПО</div>
<div class="ts r" style="left:264.45px;top:155px;width:70.1px"><i>1</i> 625 000</div>
<div class="ts r" style="left:336.45px;top:155px;width:60.25px">0</div>
<div class="ts r" style="left:398.6px;top:155px;width:64.5px">0</div>
<div class="ts r" style="left:465px;top:155px;width:59.55px">333 333</div>
<div class="ts r" style="left:526.45px;top:155px;width:61.35px"><i>1</i> 958 333</div>
<div class="tb" style="left:60.05px;top:167px;width:204px">Затраты по проектам</div>
<div class="tb r" style="left:264.45px;top:167px;width:70.1px"><i>1</i>0 962 790</div>
<div class="tb r" style="left:336.45px;top:167px;width:60.25px"><i>1</i> 770 828</div>
<div class="tb r" style="left:398.6px;top:167px;width:64.5px"><i>1</i> 364 503</div>
<div class="tb r" style="left:465px;top:167px;width:59.55px"><i>1</i> 736 449</div>
<div class="tb r" style="left:526.45px;top:167px;width:61.35px"><i>1</i>5 834 570</div>
<div class="ts" style="left:60.05px;top:180px;width:204px">Сырье, материалы, оборудование</div>
<div class="ts r" style="left:264.45px;top:179px;width:70.1px">0</div>
<div class="ts r" style="left:336.45px;top:179px;width:60.25px">409 <i>1</i>04</div>
<div class="ts r" style="left:398.6px;top:179px;width:64.5px">0</div>
<div class="ts r" style="left:465px;top:179px;width:59.55px">0</div>
<div class="ts r" style="left:526.45px;top:179px;width:61.35px">409 <i>1</i>04</div>
<div class="ts" style="left:60.05px;top:193px;width:204px">Подрядные работы</div>
<div class="ts r" style="left:264.45px;top:192px;width:70.1px"><i>1</i>0 07<i>1</i> 079</div>
<div class="ts r" style="left:336.45px;top:192px;width:60.25px">922 983</div>
<div class="ts r" style="left:398.6px;top:192px;width:64.5px">967 428</div>
<div class="ts r" style="left:465px;top:192px;width:59.55px"><i>1</i> 249 374</div>
<div class="ts r" style="left:526.45px;top:192px;width:61.35px"><i>1</i>3 2<i>1</i>0 864</div>
<div class="ts" style="left:60.05px;top:205px;width:204px">Программное обеспечение, лицензии</div>
<div class="ts r" style="left:264.45px;top:204px;width:70.1px">96 849</div>
<div class="ts r" style="left:336.45px;top:204px;width:60.25px">275 <i>1</i>06</div>
<div class="ts r" style="left:398.6px;top:204px;width:64.5px">233 440</div>
<div class="ts r" style="left:465px;top:204px;width:59.55px">2<i>1</i>2 607</div>
<div class="ts r" style="left:526.45px;top:204px;width:61.35px">8<i>1</i>8 002</div>
<div class="ts" style="left:60.05px;top:218px;width:204px">ФОТ по проектам</div>
<div class="ts r" style="left:264.45px;top:217px;width:70.1px">66 594</div>
<div class="ts r" style="left:336.45px;top:217px;width:60.25px">0</div>
<div class="ts r" style="left:398.6px;top:217px;width:64.5px">0</div>
<div class="ts r" style="left:465px;top:217px;width:59.55px">0</div>
<div class="ts r" style="left:526.45px;top:217px;width:61.35px">66 594</div>
<div class="ts" style="left:60.05px;top:230px;width:204px">Прочие проектные затраты</div>
<div class="ts r" style="left:264.45px;top:229px;width:70.1px">728 268</div>
<div class="ts r" style="left:336.45px;top:229px;width:60.25px"><i>1</i>63 635</div>
<div class="ts r" style="left:398.6px;top:229px;width:64.5px"><i>1</i>63 635</div>
<div class="ts r" style="left:465px;top:229px;width:59.55px">274 468</div>
<div class="ts r" style="left:526.45px;top:229px;width:61.35px"><i>1</i> 330 006</div>
<div class="tb" style="left:60.05px;top:242px;width:204px">Валовая прибыль по проектам</div>
<div class="tb r" style="left:264.45px;top:242px;width:70.1px">43 528 758</div>
<div class="tb r" style="left:336.45px;top:242px;width:60.25px">35 904 33<i>1</i></div>
<div class="tb r" style="left:398.6px;top:242px;width:64.5px">3 884 8<i>1</i>3</div>
<div class="tb r" style="left:465px;top:242px;width:59.55px">4 964 855</div>
<div class="tb r" style="left:526.45px;top:242px;width:61.35px">88 282 757</div>
<div class="tb" style="left:60.05px;top:254px;width:204px">Общехозяйственные расходы</div>
<div class="tb r" style="left:264.45px;top:254px;width:70.1px">0</div>
<div class="tb r" style="left:336.45px;top:254px;width:60.25px">3<i>1</i>8</div>
<div class="tb r" style="left:398.6px;top:254px;width:64.5px">55<i>1</i></div>
<div class="tb r" style="left:465px;top:254px;width:59.55px">7<i>1</i><i>1</i></div>
<div class="tb r" style="left:526.45px;top:254px;width:61.35px"><i>1</i> 580</div>
<div class="ts" style="left:60.05px;top:267px;width:204px">ФОТ административный</div>
<div class="ts r" style="left:264.45px;top:266px;width:70.1px">0</div>
<div class="ts r" style="left:336.45px;top:266px;width:60.25px">75</div>
<div class="ts r" style="left:398.6px;top:266px;width:64.5px"><i>1</i>20</div>
<div class="ts r" style="left:465px;top:266px;width:59.55px"><i>1</i>65</div>
<div class="ts r" style="left:526.45px;top:266px;width:61.35px">360</div>
<div class="ts" style="left:60.05px;top:280px;width:204px">Аренда и содержание помещений</div>
<div class="ts r" style="left:264.45px;top:279px;width:70.1px">0</div>
<div class="ts r" style="left:336.45px;top:279px;width:60.25px"><i>1</i>2</div>
<div class="ts r" style="left:398.6px;top:279px;width:64.5px">29</div>
<div class="ts r" style="left:465px;top:279px;width:59.55px">27</div>
<div class="ts r" style="left:526.45px;top:279px;width:61.35px">68</div>
<div class="ts" style="left:60.05px;top:292px;width:204px">Прочие общехозяйственные затраты</div>
<div class="ts r" style="left:264.45px;top:291px;width:70.1px">0</div>
<div class="ts r" style="left:336.45px;top:291px;width:60.25px">23<i>1</i></div>
<div class="ts r" style="left:398.6px;top:291px;width:64.5px">402</div>
<div class="ts r" style="left:465px;top:291px;width:59.55px">5<i>1</i>9</div>
<div class="ts r" style="left:526.45px;top:291px;width:61.35px"><i>1</i> <i>1</i>52</div>
<div class="tb" style="left:60.05px;top:304px;width:204px">Прочие доходы и расходы</div>
<div class="tb r" style="left:264.45px;top:304px;width:70.1px">0</div>
<div class="tb r red" style="left:336.45px;top:304px;width:60.25px">-<i>1</i>2</div>
<div class="tb r red" style="left:398.6px;top:304px;width:64.5px">-2<i>1</i></div>
<div class="tb r red" style="left:465px;top:304px;width:59.55px">-27</div>
<div class="tb r red" style="left:526.45px;top:304px;width:61.35px">-60</div>
<div class="tb" style="left:60.05px;top:316px;width:204px">Операционная прибыль</div>
<div class="tb r" style="left:264.45px;top:316px;width:70.1px">43 528 758</div>
<div class="tb r" style="left:336.45px;top:316px;width:60.25px">35 904 00<i>1</i></div>
<div class="tb r" style="left:398.6px;top:316px;width:64.5px">3 884 24<i>1</i></div>
<div class="tb r" style="left:465px;top:316px;width:59.55px">4 964 <i>1</i><i>1</i>7</div>
<div class="tb r" style="left:526.45px;top:316px;width:61.35px">88 28<i>1</i> <i>1</i><i>1</i>7</div>
<div class="tb" style="left:60.05px;top:328px;width:204px">Нематериальные активы</div>
<div class="tb" style="left:60.05px;top:341px;width:204px">Амортизация ОС</div>
<div class="tb r" style="left:264.45px;top:341px;width:70.1px">0</div>
<div class="tb r" style="left:336.45px;top:341px;width:60.25px"><i>1</i>5</div>
<div class="tb r" style="left:398.6px;top:341px;width:64.5px">24</div>
<div class="tb r" style="left:465px;top:341px;width:59.55px">33</div>
<div class="tb r" style="left:526.45px;top:341px;width:61.35px">72</div>
<div class="tb" style="left:60.05px;top:353px;width:204px">Амортизация НМА</div>
<div class="tb r" style="left:264.45px;top:353px;width:70.1px">0</div>
<div class="tb r" style="left:336.45px;top:353px;width:60.25px"><i>1</i>5</div>
<div class="tb r" style="left:398.6px;top:353px;width:64.5px">24</div>
<div class="tb r" style="left:465px;top:353px;width:59.55px">33</div>
<div class="tb r" style="left:526.45px;top:353px;width:61.35px">72</div>
<div class="tb" style="left:60.05px;top:366px;width:204px">Проценты по кредитам и займам</div>
<div class="tb r" style="left:264.45px;top:366px;width:70.1px">0</div>
<div class="tb r" style="left:336.45px;top:366px;width:60.25px">30</div>
<div class="tb r" style="left:398.6px;top:366px;width:64.5px">48</div>
<div class="tb r" style="left:465px;top:366px;width:59.55px">66</div>
<div class="tb r" style="left:526.45px;top:366px;width:61.35px"><i>1</i>44</div>
<div class="tb" style="left:60.05px;top:378px;width:204px">Прибыль до налогообложения Управленческая</div>
<div class="tb r" style="left:264.45px;top:378px;width:70.1px">43 528 758</div>
<div class="tb r" style="left:336.45px;top:378px;width:60.25px">35 903 97<i>1</i></div>
<div class="tb r" style="left:398.6px;top:378px;width:64.5px">3 884 <i>1</i>93</div>
<div class="tb r" style="left:465px;top:378px;width:59.55px">4 964 05<i>1</i></div>
<div class="tb r" style="left:526.45px;top:378px;width:61.35px">88 280 973</div>
<div class="tb" style="left:60.05px;top:390px;width:204px">Незавершенное производство</div>
<div class="tb r" style="left:264.45px;top:390px;width:70.1px"><i>1</i>3<i>1</i> 0<i>1</i>0</div>
<div class="tb r red" style="left:336.45px;top:390px;width:60.25px">-<i>1</i>3<i>1</i> 0<i>1</i>0</div>
<div class="tb r" style="left:398.6px;top:390px;width:64.5px">0</div>
<div class="tb r" style="left:465px;top:390px;width:59.55px">0</div>
<div class="tb r" style="left:526.45px;top:390px;width:61.35px">0</div>
<div class="tb" style="left:60.05px;top:403px;width:204px">Прибыль до налогообложения</div>
<div class="tb r" style="left:264.45px;top:403px;width:70.1px">43 659 768</div>
<div class="tb r" style="left:336.45px;top:403px;width:60.25px">35 772 96<i>1</i></div>
<div class="tb r" style="left:398.6px;top:403px;width:64.5px">3 884 <i>1</i>93</div>
<div class="tb r" style="left:465px;top:403px;width:59.55px">4 964 05<i>1</i></div>
<div class="tb r" style="left:526.45px;top:403px;width:61.35px">88 280 973</div>
<div class="tb" style="left:60.05px;top:415px;width:204px">Налог на прибыль</div>
<div class="tb r" style="left:264.45px;top:415px;width:70.1px">0</div>
<div class="tb r" style="left:336.45px;top:415px;width:60.25px">0</div>
<div class="tb r" style="left:398.6px;top:415px;width:64.5px">0</div>
<div class="tb r" style="left:465px;top:415px;width:59.55px">0</div>
<div class="tb r" style="left:526.45px;top:415px;width:61.35px">0</div>
<div class="tb" style="left:60.05px;top:427px;width:204px">Чистая прибыль текущего года</div>
<div class="tb r" style="left:264.45px;top:427px;width:70.1px">43 528 758</div>
<div class="tb r" style="left:336.45px;top:427px;width:60.25px">35 903 97<i>1</i></div>
<div class="tb r" style="left:398.6px;top:427px;width:64.5px">3 884 <i>1</i>93</div>
<div class="tb r" style="left:465px;top:427px;width:59.55px">4 964 05<i>1</i></div>
<div class="tb r" style="left:526.45px;top:427px;width:61.35px">88 280 973</div>
<div class="tb" style="left:60.05px;top:440px;width:204px">Рентабельность по валовой прибыли,%</div>
<div class="tb r" style="left:264.45px;top:440px;width:70.1px">80</div>
<div class="tb r" style="left:336.45px;top:440px;width:60.25px">95</div>
<div class="tb r" style="left:398.6px;top:440px;width:64.5px">74</div>
<div class="tb r" style="left:465px;top:440px;width:59.55px">74</div>
<div class="tb r" style="left:526.45px;top:440px;width:61.35px">85</div>
<div class="tb" style="left:60.05px;top:453px;width:204px">Рентабельность по управленческой прибыли,%</div>
<div class="tb r" style="left:264.45px;top:453px;width:70.1px">80</div>
<div class="tb r" style="left:336.45px;top:453px;width:60.25px">95</div>
<div class="tb r" style="left:398.6px;top:453px;width:64.5px">74</div>
<div class="tb r" style="left:465px;top:453px;width:59.55px">74</div>
<div class="tb r" style="left:526.45px;top:453px;width:61.35px">85</div>
<div class="tb" style="left:60.05px;top:467px;width:204px">Рентабельность по чистой прибыли,%</div>
<div class="tb r" style="left:264.45px;top:467px;width:70.1px">80</div>
<div class="tb r" style="left:336.45px;top:467px;width:60.25px">95</div>
<div class="tb r" style="left:398.6px;top:467px;width:64.5px">74</div>
<div class="tb r" style="left:465px;top:467px;width:59.55px">74</div>
<div class="tb r" style="left:526.45px;top:467px;width:61.35px">85</div>
</div>

<!-- scrollbar -->
<div style="left:842.4px;top:75px;width:2.7px;height:400.7px;background:#f1f1f1"></div>
<div style="left:842.4px;top:75px;width:2.7px;height:72.9px;background:#c5c5c5"></div>

<!-- right panel -->
<svg style="left:0;top:0;width:1024px;height:503px" viewBox="0 0 1024 503"><rect x="859.1" y="74.4" width=".6" height="225.2" fill="#ececec"/><rect x="864.9" y="94.90" width="144.4" height="42.20" rx="2" fill="#fff" stroke="#ebebee" stroke-width=".7"/><rect x="864.9" y="159.50" width="144.4" height="15.50" rx="2" fill="#fff" stroke="#ebebee" stroke-width=".7"/><rect x="864.9" y="196.90" width="144.4" height="19.10" rx="2" fill="#fff" stroke="#ebebee" stroke-width=".7"/><rect x="864.9" y="238.40" width="144.4" height="18.80" rx="2" fill="#fff" stroke="#ebebee" stroke-width=".7"/><rect x="864.9" y="279.70" width="144.4" height="15.40" rx="2" fill="#fff" stroke="#ebebee" stroke-width=".7"/><rect x="869.5" y="99" width="48.4" height="15.7" rx="1.6" fill="#e9ecef"/><rect x="920.4" y="99" width="50.6" height="15.7" rx="1.6" fill="#e9ecef"/><rect x="869.5" y="117.1" width="51.6" height="15.7" rx="1.6" fill="#e9ecef"/><path d="M908.15 104.60L912.75 109.20M912.75 104.60L908.15 109.20" stroke="#3a3f45" stroke-width="0.85" fill="none"/><path d="M961.40 104.60L966.00 109.20M966.00 104.60L961.40 109.20" stroke="#3a3f45" stroke-width="0.85" fill="none"/><path d="M911.15 122.70L915.75 127.30M915.75 122.70L911.15 127.30" stroke="#3a3f45" stroke-width="0.85" fill="none"/><path d="M984.90 113.00L991.30 119.40M991.30 113.00L984.90 119.40" stroke="#8c8c8c" stroke-width="0.8" fill="none"/><path d="M997.00 115.30h4.4l-2.2 2.3z" fill="#2b2b2b"/><path d="M984.90 164.40L991.30 170.80M991.30 164.40L984.90 170.80" stroke="#8c8c8c" stroke-width="0.8" fill="none"/><path d="M997.00 166.70h4.4l-2.2 2.3z" fill="#2b2b2b"/><path d="M984.90 203.50L991.30 209.90M991.30 203.50L984.90 209.90" stroke="#8c8c8c" stroke-width="0.8" fill="none"/><path d="M997.00 205.80h4.4l-2.2 2.3z" fill="#2b2b2b"/><path d="M984.90 244.50L991.30 250.90M991.30 244.50L984.90 250.90" stroke="#8c8c8c" stroke-width="0.8" fill="none"/><path d="M997.00 246.80h4.4l-2.2 2.3z" fill="#2b2b2b"/><path d="M984.90 284.50L991.30 290.90M991.30 284.50L984.90 290.90" stroke="#8c8c8c" stroke-width="0.8" fill="none"/><path d="M997.00 286.80h4.4l-2.2 2.3z" fill="#2b2b2b"/></svg>
<div class="lbl" style="left:865px;top:81.7px;transform:scaleX(1.105)">Факт (месяцы)<b>*</b></div>
<div class="lbl" style="left:865px;top:146.4px;transform:scaleX(1.085)">Прогноз (месяцы)<b>*</b></div>
<div class="lbl" style="left:865px;top:184.1px;transform:scaleX(1.041)">Сценарий (для факта)<b>*</b></div>
<div class="lbl" style="left:865px;top:225.4px;transform:scaleX(1.063)">Сценарий бюджета<b>*</b></div>
<div class="lbl" style="left:865px;top:266.5px;transform:scaleX(1.078)">Статус проекта<b>*</b></div>
<div class="ct" style="left:873.9px;top:102.9px">01_янв</div>
<div class="ct" style="left:924.8px;top:102.9px">02_фев</div>
<div class="ct" style="left:873.9px;top:121px">03_мар</div>
<div class="sv" style="left:869.3px;top:164.3px">9 items selected</div>
<div class="sv" style="left:869.3px;top:202.9px">ФАКТ(руч.)</div>
<div class="sv" style="left:869.3px;top:243.8px">Базовый</div>
<div class="sv" style="left:869.3px;top:284.6px">4 items selected</div>

<!-- bottom shadow -->
<div style="left:50px;top:510px;width:902px;height:60px;border-radius:22px;background:#888;box-shadow:0 0 36px 0 rgba(0,0,0,.345)"></div>
<!-- rounded corners -->
<svg style="left:0;top:0;width:1024px;height:503px" viewBox="0 0 1024 503"><path d="M0 496.6V503H5.6A5.6 6.4 0 0 1 0 496.6Z" fill="#b2b2b2"/><path d="M1024 497.6V503H1020A4 5.4 0 0 0 1024 497.6Z" fill="#36467f"/></svg>
</div>
</body></html>
